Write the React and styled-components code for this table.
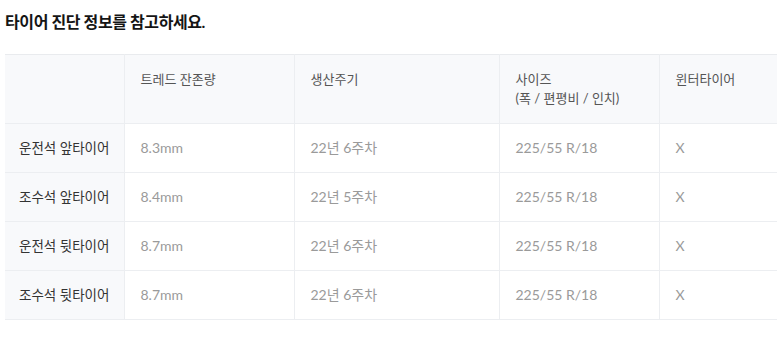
import React from 'react';
import styled, { createGlobalStyle } from 'styled-components';

const GlobalStyle = createGlobalStyle`
  body {
    margin: 0;
    background: #fff;
    font-family: Lato, 'Noto Sans CJK KR', sans-serif;
  }
  *, *::before, *::after { box-sizing: border-box; }
`;

const Wrap = styled.div`
  padding: 10px 0 0 5px;
`;

const Title = styled.h2`
  margin: 0 0 20px;
  font-size: 16px;
  line-height: 24px;
  font-weight: 700;
  color: #151515;
  letter-spacing: -0.4px;
`;

const Table = styled.table`
  width: 100%;
  border-collapse: collapse;
  table-layout: fixed;
  border-top: 1px solid #e9ebee;
`;

const Th = styled.th`
  width: ${(p) => (p.w ? `${p.w}px` : 'auto')};
  padding: 15px 16px;
  text-align: left;
  vertical-align: top;
  font-size: 13px;
  line-height: 19px;
  font-weight: 400;
  color: #555;
  background: #f8f9fb;
  border-bottom: 1px solid #eceef1;
  border-left: ${(p) => (p.first ? 'none' : '1px solid #eceef1')};
`;

const Label = styled.td`
  padding: 15px 14px;
  font-size: 13.5px;
  line-height: 18px;
  color: #333;
  background: #f8f9fb;
  border-bottom: 1px solid #eceef1;
`;

const Cell = styled.td`
  padding: 15px 16px;
  font-size: 14px;
  line-height: 18px;
  color: #9a9a9a;
  border-bottom: 1px solid #eceef1;
  border-left: 1px solid #eceef1;
`;

const columns = [
  { key: 'pos', w: 119, label: '' },
  { key: 'tread', w: 170, label: '트레드 잔존량' },
  { key: 'week', w: 205, label: '생산주기' },
  { key: 'size', w: 160, label: ['사이즈', '(폭 / 편평비 / 인치)'] },
  { key: 'winter', label: '윈터타이어' },
];

const rows = [
  { pos: '운전석 앞타이어', tread: '8.3mm', week: '22년 6주차', size: '225/55 R/18', winter: 'X' },
  { pos: '조수석 앞타이어', tread: '8.4mm', week: '22년 5주차', size: '225/55 R/18', winter: 'X' },
  { pos: '운전석 뒷타이어', tread: '8.7mm', week: '22년 6주차', size: '225/55 R/18', winter: 'X' },
  { pos: '조수석 뒷타이어', tread: '8.7mm', week: '22년 6주차', size: '225/55 R/18', winter: 'X' },
];

export default function App() {
  return (
    <>
      <GlobalStyle />
      <Wrap>
        <Title>타이어 진단 정보를 참고하세요.</Title>
        <Table>
          <thead>
            <tr>
              {columns.map((c, i) => (
                <Th key={c.key} w={c.w} first={i === 0}>
                  {Array.isArray(c.label)
                    ? c.label.map((l, j) => <div key={j}>{l}</div>)
                    : c.label}
                </Th>
              ))}
            </tr>
          </thead>
          <tbody>
            {rows.map((r, i) => (
              <tr key={i}>
                <Label>{r.pos}</Label>
                <Cell>{r.tread}</Cell>
                <Cell>{r.week}</Cell>
                <Cell>{r.size}</Cell>
                <Cell>{r.winter}</Cell>
              </tr>
            ))}
          </tbody>
        </Table>
      </Wrap>
    </>
  );
}
